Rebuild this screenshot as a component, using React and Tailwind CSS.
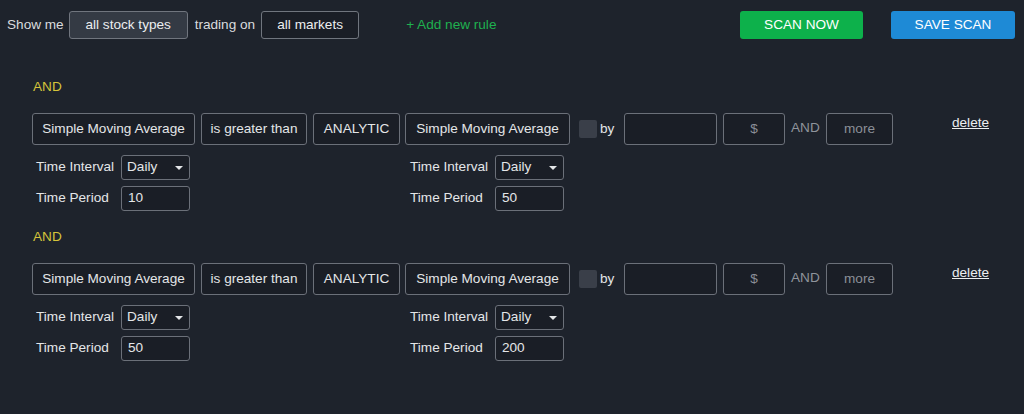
import React from 'react'

const font = { fontFamily: '"Liberation Sans", Arial, sans-serif' }

function Box({ children, w, muted }) {
  return (
    <div
      className={`h-[32px] ${w} flex items-center justify-center rounded-[3px] border border-[#6b7079] bg-[#1a1e26] text-[13.6px] ${muted ? 'text-[#8a8f97]' : 'text-[#e4e6e8]'}`}
    >
      {children}
    </div>
  )
}

function Select({ value }) {
  return (
    <div className="h-[25px] w-[69px] flex items-center justify-between rounded-[3px] border border-[#6b7079] bg-[#1a1e26] pl-[5px] pr-[6px] text-[13.6px] text-[#e4e6e8]">
      <span>{value}</span>
      <span className="w-0 h-0 border-l-[4px] border-r-[4px] border-t-[4px] border-l-transparent border-r-transparent border-t-[#e4e6e8]" />
    </div>
  )
}

function Field({ value }) {
  return (
    <div className="h-[25px] w-[69px] flex items-center rounded-[3px] border border-[#6b7079] bg-[#1a1e26] pl-[6px] text-[13.6px] text-[#e4e6e8]">
      {value}
    </div>
  )
}

function Params({ interval, period }) {
  return (
    <div className="flex flex-col gap-[6px]">
      <div className="flex items-center">
        <span className="w-[85px] text-[13.6px] text-[#e4e6e8]">Time Interval</span>
        <Select value={interval} />
      </div>
      <div className="flex items-center">
        <span className="w-[85px] text-[13.6px] text-[#e4e6e8]">Time Period</span>
        <Field value={period} />
      </div>
    </div>
  )
}

function Rule({ left, right }) {
  return (
    <div className="pl-[32px]">
      <div className="h-[16px] text-[13.6px] leading-[16px] text-[#d4c33a] pl-[1px]">AND</div>
      <div className="mt-[18px] flex items-start">
        <div className="flex items-center">
          <Box w="w-[163px]">Simple Moving Average</Box>
          <div className="w-[6px]" />
          <Box w="w-[106px]">is greater than</Box>
          <div className="w-[6px]" />
          <Box w="w-[87px]">ANALYTIC</Box>
          <div className="w-[5px]" />
          <Box w="w-[165px]">Simple Moving Average</Box>
          <div className="ml-[9px] h-[18px] w-[18px] rounded-[2px] bg-[#3a3f49]" />
          <span className="ml-[3px] w-[14px] text-[13.6px] text-[#e4e6e8]">by</span>
          <div className="ml-[10px]" />
          <Box w="w-[93px]" />
          <div className="w-[6px]" />
          <Box w="w-[62px]" muted>$</Box>
          <span className="ml-[6px] mr-[6px] w-[29px] text-[13.6px] text-[#8f949b] self-start mt-[5px]">AND</span>
          <Box w="w-[67px]" muted>more</Box>
        </div>
        <a className="ml-[59px] text-[13.6px] text-[#eceef0] underline">delete</a>
      </div>
      <div className="mt-[10px] flex pl-[4px]">
        <div className="w-[374px]">
          <Params interval="Daily" period={left} />
        </div>
        <Params interval="Daily" period={right} />
      </div>
    </div>
  )
}

export default function App() {
  return (
    <div className="w-[1024px] h-[414px] bg-[#1e232c] overflow-hidden" style={font}>
      <div className="h-[50px] flex items-center pl-[7px] pr-[9px]">
        <span className="text-[13.6px] text-[#d9dbde]">Show me</span>
        <div className="ml-[5px] h-[28px] w-[119px] flex items-center justify-center rounded-[3px] border border-[#70757e] bg-[#343a44] text-[13.6px] text-[#eceef0]">
          all stock types
        </div>
        <span className="ml-[7px] text-[13.6px] text-[#d9dbde]">trading on</span>
        <div className="ml-[6px] h-[28px] w-[98px] flex items-center justify-center rounded-[3px] border border-[#70757e] bg-[#1a1e26] text-[13.6px] text-[#eceef0]">
          all markets
        </div>
        <span className="ml-[47px] text-[13.6px] text-[#1fb14f]">+ Add new rule</span>
        <button className="ml-auto h-[28px] w-[123px] rounded-[3px] bg-[#0db14b] text-[13.6px] text-white">
          SCAN NOW
        </button>
        <button className="ml-[28px] h-[28px] w-[124px] rounded-[3px] bg-[#1e8ad6] text-[13.6px] text-white">
          SAVE SCAN
        </button>
      </div>
      <div className="pt-[29px] flex flex-col gap-[18px]">
        <Rule left="10" right="50" />
        <Rule left="50" right="200" />
      </div>
    </div>
  )
}
